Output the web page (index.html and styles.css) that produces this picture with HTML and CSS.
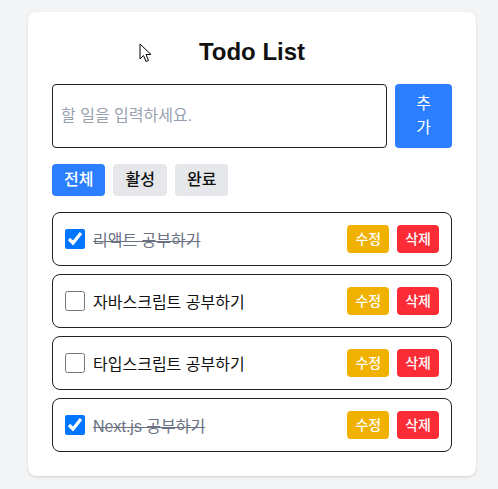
FILE: index.html
```html
<!DOCTYPE html>
<html lang="ko">
<head>
<meta charset="utf-8">
<link rel="stylesheet" href="styles.css">
</head>
<body>
<div class="card">
  <h1 class="title">Todo List</h1>
  <div class="add-row">
    <input class="add-input" type="text" placeholder="할 일을 입력하세요.">
    <button class="add-btn">추가</button>
  </div>
  <div class="filters">
    <button class="filter active">전체</button>
    <button class="filter">활성</button>
    <button class="filter">완료</button>
  </div>
  <ul class="list">
    <li class="item">
      <input class="check" type="checkbox" checked>
      <span class="text done">리액트 공부하기</span>
      <button class="btn edit">수정</button>
      <button class="btn del">삭제</button>
    </li>
    <li class="item">
      <input class="check" type="checkbox">
      <span class="text">자바스크립트 공부하기</span>
      <button class="btn edit">수정</button>
      <button class="btn del">삭제</button>
    </li>
    <li class="item">
      <input class="check" type="checkbox">
      <span class="text">타입스크립트 공부하기</span>
      <button class="btn edit">수정</button>
      <button class="btn del">삭제</button>
    </li>
    <li class="item">
      <input class="check" type="checkbox" checked>
      <span class="text done">Next.js 공부하기</span>
      <button class="btn edit">수정</button>
      <button class="btn del">삭제</button>
    </li>
  </ul>
</div>
<svg class="cursor" width="13" height="20" viewBox="0 0 13 20"><path d="M1 1 L1 16 L4.5 12.5 L7 18.5 L9.5 17.5 L7 11.5 L12 11.5 Z" fill="#fff" stroke="#000" stroke-width="1" stroke-linejoin="round"/></svg>
</body>
</html>
```
FILE: styles.css
```css
html, body {
  margin: 0;
  padding: 0;
  background: #f3f4f6;
  font-family: "Liberation Sans", "Noto Sans CJK KR", sans-serif;
  color: #111;
}
body {
  padding: 12px 22px 13px 28px;
  position: relative;
  height: 489px;
  box-sizing: border-box;
}
.card {
  width: 448px;
  box-sizing: border-box;
  background: #fff;
  border-radius: 8px;
  box-shadow: 0 1px 3px rgba(0,0,0,0.1), 0 1px 2px rgba(0,0,0,0.06);
  padding: 24px;
}
.title {
  margin: 0 0 16px;
  font-size: 24px;
  line-height: 32px;
  font-weight: 700;
  text-align: center;
}
.add-row {
  display: flex;
  gap: 8px;
  margin-bottom: 16px;
}
.add-input {
  flex: 1;
  min-width: 0;
  border: 1px solid #222;
  border-radius: 4px;
  padding: 0 8px;
  font-size: 16px;
  font-family: inherit;
  outline: none;
}
.add-input::placeholder { color: #99a1af; }
.add-btn {
  width: 57px;
  padding: 8px 16px;
  border: none;
  border-radius: 4px;
  background: #2b7fff;
  color: #fff;
  font-size: 16px;
  line-height: 24px;
  font-family: inherit;
}
.filters {
  display: flex;
  gap: 8px;
  margin-bottom: 16px;
}
.filter {
  border: none;
  border-radius: 4px;
  background: #e5e7eb;
  color: #111;
  font-size: 16px;
  line-height: 24px;
  padding: 4px 12px;
  font-family: inherit;
  font-weight: 500;
}
.filter.active { background: #2b7fff; color: #fff; }
.list {
  list-style: none;
  margin: 0;
  padding: 0;
  display: flex;
  flex-direction: column;
  gap: 8px;
}
.item {
  display: flex;
  align-items: center;
  gap: 8px;
  border: 1px solid #222;
  border-radius: 8px;
  padding: 12px;
  height: 54px;
  box-sizing: border-box;
}
.check {
  width: 20px;
  height: 20px;
  margin: 0;
  accent-color: #0075ff;
}
.text {
  flex: 1;
  font-size: 16px;
  color: #111;
}
.text.done {
  color: #6a7282;
  text-decoration: line-through;
}
.btn {
  border: none;
  border-radius: 4px;
  color: #fff;
  font-size: 14px;
  line-height: 20px;
  padding: 4px 8px;
  font-family: inherit;
  font-weight: 500;
}
.edit { background: #f0b100; }
.del { background: #fb2c36; }
.cursor {
  position: absolute;
  left: 139px;
  top: 43px;
}
```
